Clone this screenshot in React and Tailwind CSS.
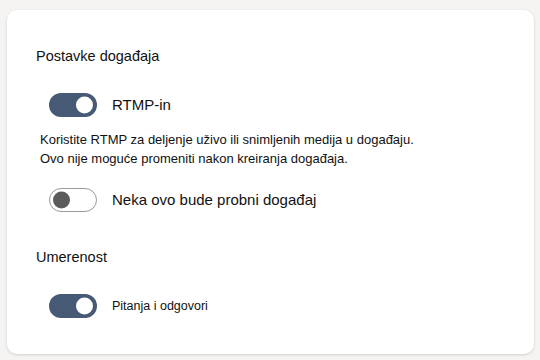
import React, { useState } from 'react';

// Simple toggle switch in Fluent style
const Toggle = ({ on, onChange }) => (
  <button
    type="button"
    onClick={onChange}
    className={`relative w-[48px] h-[24px] rounded-full shrink-0 ${
      on ? 'bg-[#475a75]' : 'bg-white border border-[#9a9a9a]'
    }`}
  >
    <span
      className={`absolute top-1/2 -translate-y-1/2 w-[17px] h-[17px] rounded-full ${
        on ? 'right-[4px] bg-white' : 'left-[3px] bg-[#5c5c5c]'
      }`}
    />
  </button>
);

const App = () => {
  const [rtmp, setRtmp] = useState(true);
  const [test, setTest] = useState(false);
  const [qa, setQa] = useState(true);

  return (
    <div className="w-[540px] h-[360px] bg-[#f5f4f3] pt-[10px] px-[7px] font-['Liberation_Sans',Arial,sans-serif] text-[#111]">
      <div className="bg-white rounded-[10px] h-[344px] w-[527px] shadow-[0_1px_3px_rgba(0,0,0,0.15)] pl-[29px] pt-[36px]">
        <h2 className="text-[14.5px] leading-[20px]">Postavke događaja</h2>

        <div className="flex items-center gap-[15px] mt-[27px] pl-[13px]">
          <Toggle on={rtmp} onChange={() => setRtmp(!rtmp)} />
          <span className="text-[15px]">RTMP-in</span>
        </div>

        <p className="text-[13px] leading-[19px] mt-[13px] pl-[4px]">
          Koristite RTMP za deljenje uživo ili snimljenih medija u događaju.
          <br />
          Ovo nije moguće promeniti nakon kreiranja događaja.
        </p>

        <div className="flex items-center gap-[15px] mt-[20px] pl-[13px]">
          <Toggle on={test} onChange={() => setTest(!test)} />
          <span className="text-[15px]">Neka ovo bude probni događaj</span>
        </div>

        <h2 className="text-[14.5px] leading-[20px] mt-[35px]">Umerenost</h2>

        <div className="flex items-center gap-[15px] mt-[27px] pl-[13px]">
          <Toggle on={qa} onChange={() => setQa(!qa)} />
          <span className="text-[12.5px]">Pitanja i odgovori</span>
        </div>
      </div>
    </div>
  );
};

export default App;
